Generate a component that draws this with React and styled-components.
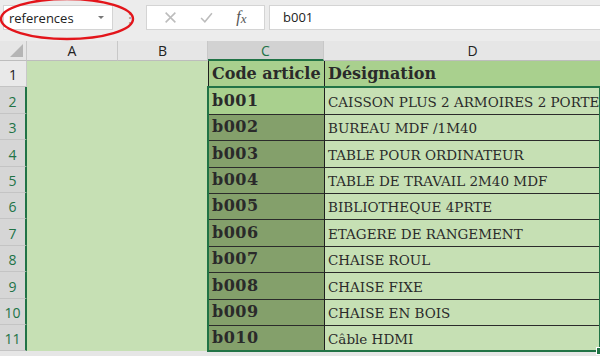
import React from 'react'
import styled, { createGlobalStyle } from 'styled-components'

const GlobalStyle = createGlobalStyle`
    html, body {
        margin: 0;
        padding: 0;
        background: #ffffff;
    }
    #root {
        width: 600px;
        height: 356px;
        overflow: hidden;
    }
`

const rows = [
    { code: 'b001', label: 'CAISSON PLUS 2 ARMOIRES 2 PORTES' },
    { code: 'b002', label: 'BUREAU MDF /1M40' },
    { code: 'b003', label: 'TABLE POUR ORDINATEUR' },
    { code: 'b004', label: 'TABLE DE TRAVAIL 2M40 MDF' },
    { code: 'b005', label: 'BIBLIOTHEQUE 4PRTE' },
    { code: 'b006', label: 'ETAGERE DE RANGEMENT' },
    { code: 'b007', label: 'CHAISE ROUL' },
    { code: 'b008', label: 'CHAISE FIXE' },
    { code: 'b009', label: 'CHAISE EN BOIS' },
    { code: 'b010', label: 'Câble HDMI' },
]

const App = () => {

    return (
        <Window>
            <GlobalStyle />

            <Toolbar>
                <NameBox>
                    <span>references</span>
                    <Caret />
                </NameBox>
                <Grip>⋮</Grip>
                <FormulaButtons>
                    <ToolIcon viewBox="0 0 12 12">
                        <path d="M1.5 1.5 L10.5 10.5 M10.5 1.5 L1.5 10.5" />
                    </ToolIcon>
                    <ToolIcon viewBox="0 0 12 12">
                        <path d="M1 6.5 L4.5 10 L11 2" />
                    </ToolIcon>
                    <Fx>f<sub>x</sub></Fx>
                </FormulaButtons>
                <FormulaInput>b001</FormulaInput>
                <Annotation viewBox="0 0 140 44">
                    <ellipse cx="67" cy="20" rx="66" ry="20" />
                </Annotation>
            </Toolbar>

            <Sheet>
                <Corner><CornerMark /></Corner>
                <ColHead>A</ColHead>
                <ColHead>B</ColHead>
                <ColHead active>C</ColHead>
                <ColHead>D</ColHead>

                <RowHead>1</RowHead>
                <Cell fill="#c6e0b4" />
                <Cell fill="#c6e0b4" />
                <Cell fill="#a9d08e" heading ruled>Code article</Cell>
                <Cell fill="#a9d08e" heading ruled>Désignation</Cell>

                {rows.map((item, i) =>
                    <React.Fragment key={item.code}>
                        <RowHead active>{i + 2}</RowHead>
                        <Cell fill="#c6e0b4" />
                        <Cell fill="#c6e0b4" />
                        <Cell fill={i == 0 ? '#a9d08e' : '#84a06b'} code ruled line={i > 0}>{item.code}</Cell>
                        <Cell fill="#c6e0b4" ruled line>{item.label}</Cell>
                    </React.Fragment>
                )}

                <Selection>
                    <Handle />
                </Selection>
            </Sheet>
        </Window>
    )
}

export default App

const Window = styled.div`
    width: 600px;
    height: 356px;
    overflow: hidden;
    background: #e6e6e6;
    display: flex;
    flex-direction: column;
`

const Toolbar = styled.div`
    position: relative;
    height: 41px;
    flex: 0 0 41px;
    display: flex;
    align-items: flex-start;
    padding-top: 5px;
    box-sizing: border-box;
    background: #ececec;
    font-family: "Open Sans", "Noto Sans", sans-serif;
`

const NameBox = styled.div`
    margin-left: 3px;
    width: 110px;
    height: 25px;
    box-sizing: border-box;
    background: #ffffff;
    border: 1px solid #d4d4d4;
    display: flex;
    align-items: center;
    justify-content: space-between;
    padding: 0 8px 0 5px;
    font-size: 13px;
    color: #222;
`

const Caret = styled.span`
    width: 0;
    height: 0;
    border-left: 3px solid transparent;
    border-right: 3px solid transparent;
    border-top: 3px solid #777;
`

const Grip = styled.div`
    width: 33px;
    text-align: center;
    line-height: 25px;
    color: #9a9a9a;
    font-size: 14px;
`

const FormulaButtons = styled.div`
    width: 119px;
    height: 25px;
    box-sizing: border-box;
    background: #ffffff;
    border: 1px solid #d4d4d4;
    display: flex;
    align-items: center;
    justify-content: space-around;
    padding: 0 6px;
`

const ToolIcon = styled.svg`
    width: 13px;
    height: 13px;
    fill: none;
    stroke: #bcbcbc;
    stroke-width: 1.4;
`

const Fx = styled.span`
    font-family: "Liberation Serif", serif;
    font-style: italic;
    font-size: 16px;
    color: #555;

    sub {
        font-size: 13px;
        vertical-align: -1px;
    }
`

const FormulaInput = styled.div`
    margin-left: 4px;
    flex: 1;
    height: 25px;
    box-sizing: border-box;
    background: #ffffff;
    border: 1px solid #d4d4d4;
    border-right: none;
    padding-left: 13px;
    line-height: 23px;
    font-size: 13px;
    color: #222;
`

const Annotation = styled.svg`
    position: absolute;
    left: 0;
    top: -1px;
    width: 140px;
    height: 44px;
    overflow: visible;
    fill: none;
    stroke: #e3151b;
    stroke-width: 2.4;
    pointer-events: none;
`

const Sheet = styled.div`
    display: grid;
    grid-template-columns: 27px 91px 90px 116px 298px;
    grid-template-rows: 20px repeat(11, 26.4px);
    position: relative;
    font-family: "DejaVu Serif", "Liberation Serif", serif;
`

const Corner = styled.div`
    position: relative;
    background: #e6e6e6;
    border-right: 1px solid #c8c8c8;
    border-bottom: 1px solid #bdbdbd;
`

const CornerMark = styled.div`
    position: absolute;
    right: 3px;
    bottom: 3px;
    width: 0;
    height: 0;
    border-left: 13px solid transparent;
    border-bottom: 13px solid #b5b5b5;
`

const ColHead = styled.div`
    display: flex;
    align-items: center;
    justify-content: center;
    font-family: "Open Sans", "Noto Sans", sans-serif;
    font-size: 14px;
    color: ${props => props.active ? '#217346' : '#222'};
    background: ${props => props.active ? '#d2d2d2' : '#e6e6e6'};
    border-right: 1px solid #c8c8c8;
    border-bottom: ${props => props.active ? '2px solid #217346' : '1px solid #bdbdbd'};
    box-sizing: border-box;
`

const RowHead = styled.div`
    display: flex;
    align-items: flex-end;
    justify-content: center;
    padding-bottom: 2px;
    box-sizing: border-box;
    font-family: "Open Sans", "Noto Sans", sans-serif;
    font-size: 14px;
    color: ${props => props.active ? '#217346' : '#222'};
    background: ${props => props.active ? '#d6d6d6' : '#e9e9e9'};
    border-bottom: 1px solid #c4c4c4;
    border-right: ${props => props.active ? '2px solid #217346' : '1px solid #c8c8c8'};
`

const Cell = styled.div`
    display: flex;
    align-items: flex-end;
    padding: 0 0 4px 3px;
    box-sizing: border-box;
    white-space: nowrap;
    overflow: hidden;
    background: ${props => props.fill};
    color: #2a2a2a;
    font-size: ${props => props.heading || props.code ? '16px' : '13.5px'};
    font-weight: ${props => props.heading || props.code ? 'bold' : 'normal'};
    letter-spacing: ${props => props.code ? '0.5px' : '0'};
    border-top: ${props => props.line ? '1px solid #2b2b2b' : 'none'};
    border-left: ${props => props.ruled ? '1px solid #1f1f1f' : 'none'};
`

const Selection = styled.div`
    position: absolute;
    grid-column: 4;
    grid-row: 3 / 13;
    inset: -1px;
    border: 2px solid #217346;
    pointer-events: none;
`

const Handle = styled.div`
    position: absolute;
    right: -5px;
    bottom: -5px;
    width: 6px;
    height: 6px;
    background: #217346;
    border: 1px solid #ffffff;
`
